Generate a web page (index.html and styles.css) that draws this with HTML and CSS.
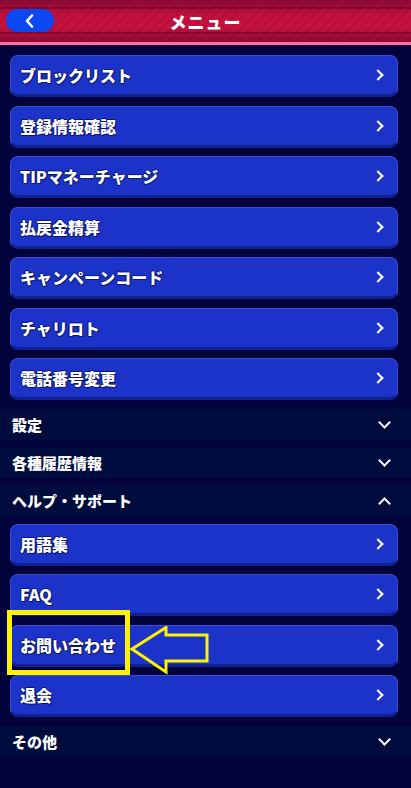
FILE: index.html
```html
<!DOCTYPE html>
<html lang="ja">
<head>
    <meta charset="UTF-8">
    <meta name="viewport" content="width=device-width, initial-scale=1.0">
    <title>メニュー</title>
    <link rel="stylesheet" href="styles.css">
</head>
<body>

    <!-- ヘッダー -->
    <div class="header">
        <button class="back-btn">
            <svg width="12" height="14" viewBox="0 0 12 14"><path d="M8 1.5 L3 7 L8 12.5" fill="none" stroke="#fff" stroke-width="2.6" stroke-linecap="round" stroke-linejoin="round"/></svg>
        </button>
        <h1>メニュー</h1>
    </div>

    <!-- メニュー一覧 -->
    <div class="menu">
        <div class="menu-item"><span>ブロックリスト</span><i class="arrow"></i></div>
        <div class="menu-item"><span>登録情報確認</span><i class="arrow"></i></div>
        <div class="menu-item"><span>TIPマネーチャージ</span><i class="arrow"></i></div>
        <div class="menu-item"><span>払戻金精算</span><i class="arrow"></i></div>
        <div class="menu-item"><span>キャンペーンコード</span><i class="arrow"></i></div>
        <div class="menu-item"><span>チャリロト</span><i class="arrow"></i></div>
        <div class="menu-item"><span>電話番号変更</span><i class="arrow"></i></div>

        <div class="section"><span>設定</span><i class="caret"></i></div>
        <div class="section"><span>各種履歴情報</span><i class="caret"></i></div>
        <div class="section"><span>ヘルプ・サポート</span><i class="caret up"></i></div>

        <div class="menu-item"><span>用語集</span><i class="arrow"></i></div>
        <div class="menu-item"><span>FAQ</span><i class="arrow"></i></div>
        <div class="menu-item marked">
            <span>お問い合わせ</span><i class="arrow"></i>
            <!-- 注釈 -->
            <div class="mark-box"></div>
            <svg class="mark-arrow" width="80" height="50" viewBox="0 0 80 50">
                <path d="M2 23 L36 1.5 L36 9 L77 9 L77 35 L36 35 L36 46 Z" fill="none" stroke="#fff200" stroke-width="3" stroke-linejoin="miter"/>
            </svg>
        </div>
        <div class="menu-item"><span>退会</span><i class="arrow"></i></div>

        <div class="section"><span>その他</span><i class="caret"></i></div>
    </div>

</body>
</html>
```

FILE: styles.css
```css
* {
    margin: 0;
    padding: 0;
    box-sizing: border-box;
}
body {
    font-family: "Noto Sans CJK JP", "Noto Sans", sans-serif;
    background-color: #01033a;
    color: white;
    height: 788px;
    overflow: hidden;
}
.header {
    height: 45px;
    position: relative;
    display: flex;
    align-items: center;
    justify-content: center;
    border-bottom: 3px solid #ff6e9c;
    background:
        linear-gradient(to bottom, transparent 7px, rgba(90, 0, 30, 0.45) 7px, rgba(90, 0, 30, 0.45) 9px, transparent 9px,
            transparent 32px, rgba(90, 0, 30, 0.45) 32px, rgba(90, 0, 30, 0.45) 34px, transparent 34px),
        repeating-linear-gradient(135deg, rgba(0, 0, 0, 0.07) 0 3px, transparent 3px 7px),
        linear-gradient(to bottom, #8a0a35 0%, #c4103f 35%, #c8123f 65%, #8c0a36 100%);
}
.header h1 {
    font-size: 17px;
    font-weight: 900;
    letter-spacing: 1px;
}
.back-btn {
    position: absolute;
    left: 6px;
    top: 9px;
    width: 48px;
    height: 23px;
    border: none;
    border-radius: 12px;
    background-color: #0b48f2;
    display: flex;
    align-items: center;
    justify-content: center;
}
.menu {
    padding: 10px 13px 0 10px;
    display: flex;
    flex-direction: column;
}
.menu-item {
    position: relative;
    height: 42px;
    margin-bottom: 8.5px;
    background-color: #1b33c8;
    border: 1px solid #3550d6;
    border-bottom: 3px solid #0f2290;
    border-radius: 8px;
    display: flex;
    align-items: center;
    justify-content: space-between;
    padding: 0 12px 0 9px;
    font-size: 16px;
    font-weight: 900;
    text-shadow: 1px 1px 0 #0a1670, -1px 0 0 #0a1670, 0 -1px 0 #0a1670, 1px 0 0 #0a1670, 0 1px 0 #0a1670;
}
.arrow {
    width: 8px;
    height: 8px;
    border-top: 2.4px solid #fff;
    border-right: 2.4px solid #fff;
    transform: rotate(45deg);
    margin-right: 3px;
}
.section {
    height: 31px;
    margin: 0 -13px 7px -10px;
    background-color: #000b3e;
    display: flex;
    align-items: center;
    justify-content: space-between;
    padding: 0 22px 0 12px;
    font-size: 15px;
    font-weight: 900;
}
.section + .menu-item {
    margin-top: 1px;
}
.caret {
    width: 9px;
    height: 9px;
    border-right: 2.6px solid #fff;
    border-bottom: 2.6px solid #fff;
    transform: translateY(-2px) rotate(45deg);
}
.caret.up {
    transform: translateY(3px) rotate(-135deg);
}
.mark-box {
    position: absolute;
    left: -4px;
    top: -16px;
    width: 123px;
    height: 65px;
    border: 5px solid #fff200;
}
.mark-arrow {
    position: absolute;
    left: 119px;
    top: 0;
}
```
